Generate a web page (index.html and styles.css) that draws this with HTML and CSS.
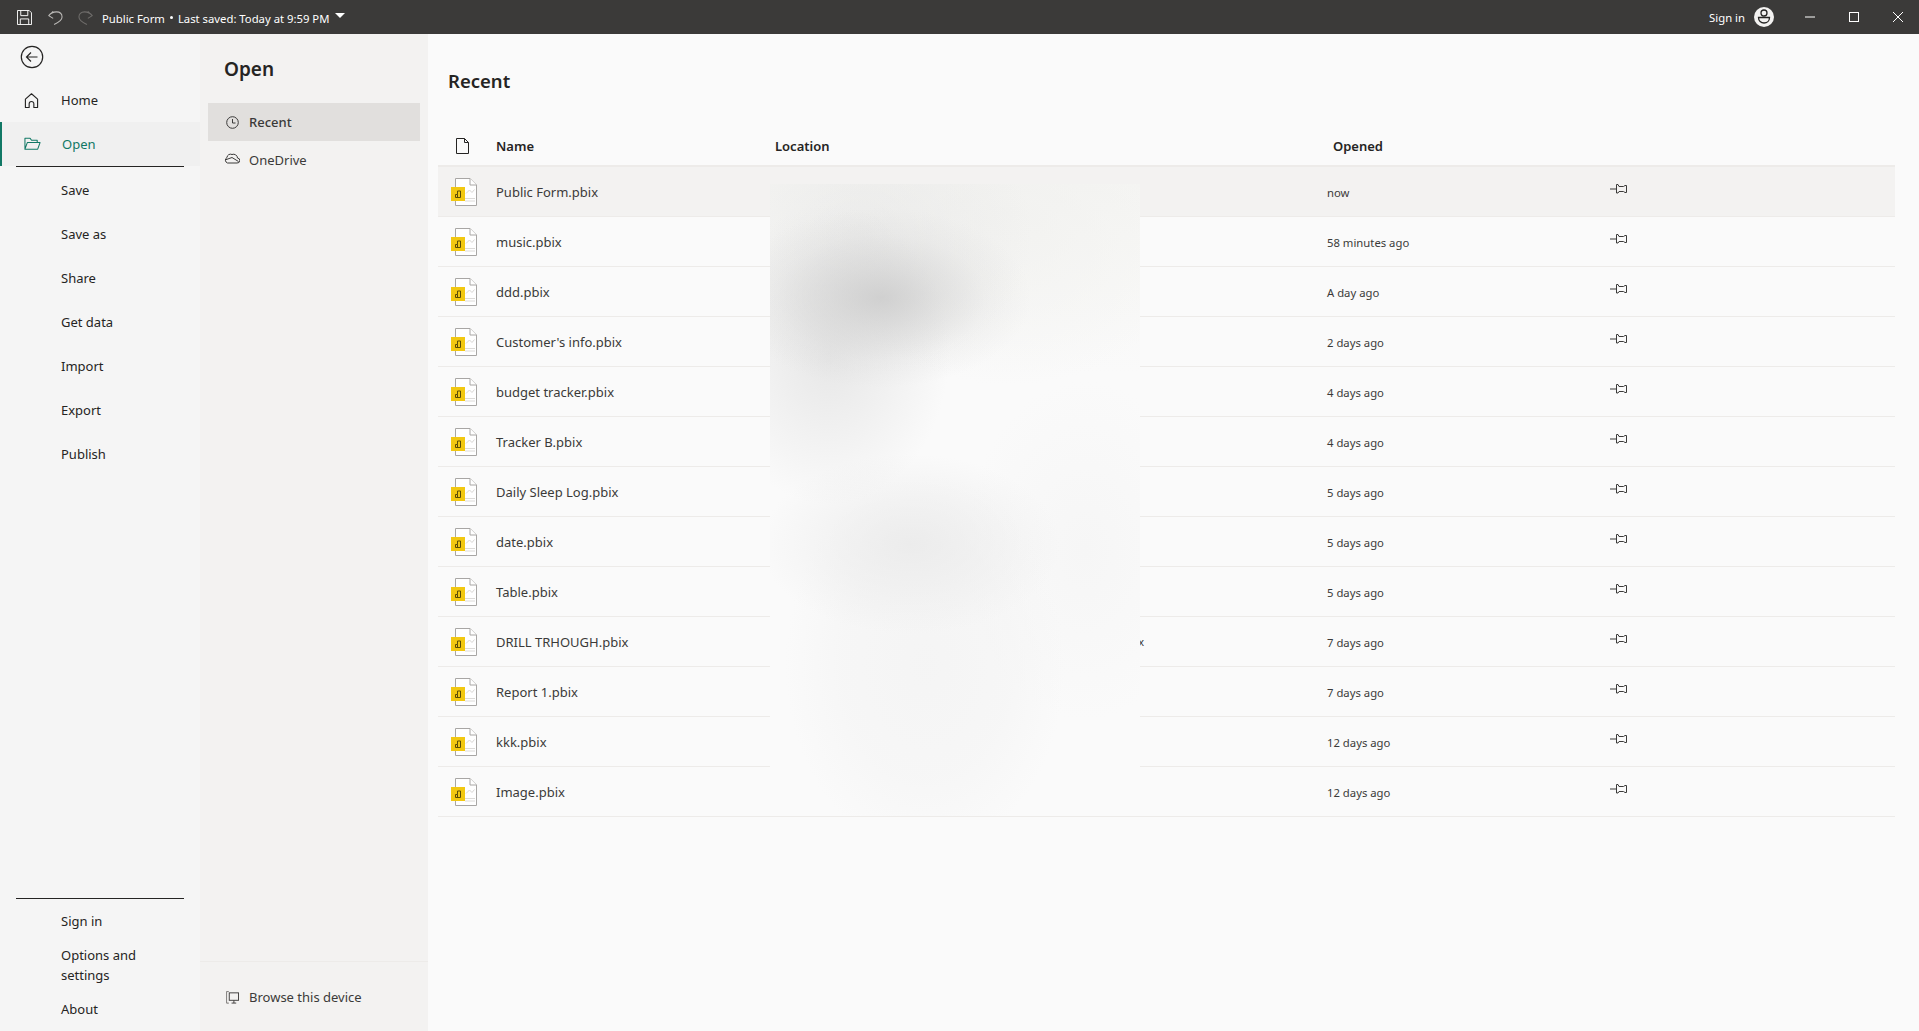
FILE: index.html
```html
<!DOCTYPE html>
<html lang="en">
<head>
<meta charset="utf-8">
<title>Public Form</title>
<link rel="stylesheet" href="styles.css">
</head>
<body>
<svg class="defs" width="0" height="0" aria-hidden="true">
  <symbol id="pbix" viewBox="0 0 26 28">
    <path d="M4.500 .5H19L25.500 7V27.500H4.500Z" fill="#fff" stroke="#a8a6a4"/>
    <path d="M19 .5V7H25.500" fill="#fff" stroke="#a8a6a4"/>
    <path d="M15 15.500l3.500-3.500 2.500 2.500 2.500-3" fill="none" stroke="#d8d6d4"/>
    <path d="M14 20.500H24M14 23H24" stroke="#dcdad8"/>
    <rect x="0" y="9" width="14" height="14" fill="#f2c811"/>
    <path d="M4.500 19.500V16.500H6.500V13H9.500V19.500ZM6.500 19.500V16.500" fill="none" stroke="#5c4d06"/>
  </symbol>
  <symbol id="pin" viewBox="0 0 17 11">
    <path d="M0 6H6.500M6.500 1.500V10H8L9 8.500H13.500L15 9.500H16.500V2.500H15L13.500 3.500H9L8 1.500Z" fill="none" stroke="#3b3a39"/>
  </symbol>
</svg>

<header class="titlebar">
  <svg class="ti save" viewBox="0 0 16 16"><path d="M.5.5H13L15.500 3V15.500H.5ZM4 .5V6H11.500V.5M3.500 15.500V9.500H12.500V15.500" fill="none" stroke="#fff"/></svg>
  <svg class="ti undo" viewBox="0 0 16 16"><path d="M5.500 1.500L.8 6 5.500 9M.8 6C3 3 6 2 9 2 13 2 15 4.500 15 7.500 15 10 12 13 6.500 15.500" fill="none" stroke="#bdbbb9" stroke-width="1.100"/></svg>
  <svg class="ti redo" viewBox="0 0 16 16"><path d="M10.500 1.500L15.200 6 10.500 9M15.200 6C13 3 10 2 7 2 3 2 1 4.500 1 7.500 1 10 4 13 9.500 15.500" fill="none" stroke="#6f6d6b" stroke-width="1.100"/></svg>
  <span class="doc">Public Form</span>
  <span class="dot"></span>
  <span class="doc">Last saved: Today at 9:59 PM</span>
  <span class="caret"></span>
  <span class="grow"></span>
  <span class="signin">Sign in</span>
  <svg class="avatar" viewBox="0 0 20 20">
    <circle cx="10" cy="10" r="10" fill="#f3f2f1"/>
    <circle cx="10" cy="6" r="3" fill="none" stroke="#252423" stroke-width="1.300"/>
    <path d="M4.500 10.500H15.500C15.500 14 13 16 10 16S4.500 14 4.500 10.500Z" fill="none" stroke="#252423" stroke-width="1.300"/>
  </svg>
  <svg class="win wmin" viewBox="0 0 10 10"><path d="M0 5H10" stroke="#fff"/></svg>
  <svg class="win wmax" viewBox="0 0 10 10"><rect x=".5" y=".5" width="9" height="9" fill="none" stroke="#fff"/></svg>
  <svg class="win wclose" viewBox="0 0 10 10"><path d="M0 0L10 10M10 0L0 10" stroke="#fff"/></svg>
</header>

<div class="app">
  <nav class="nav">
    <svg class="back" viewBox="0 0 24 24"><circle cx="12" cy="12" r="10.700" fill="none" stroke="#252423" stroke-width="1.200"/><path d="M17.500 12H7M11 7.500L6.500 12 11 16.500" fill="none" stroke="#252423" stroke-width="1.200"/></svg>
    <a class="nav-item home">
      <svg class="nav-ic" viewBox="0 0 16 16"><path d="M1.500 15.500V6.500L8 .8l6.500 5.700v9H10.500V11.500a2.500 2.500 0 0 0-5 0v4Z" fill="none" stroke="#252423" stroke-width="1.200" stroke-linejoin="round"/></svg>
      Home
    </a>
    <a class="nav-item open">
      <svg class="nav-ic wide" viewBox="0 0 18 14"><path d="M1 12.500V1H6.500L8 3H14V5M1 12.500 3.500 5.500H17L14.500 12.500Z" fill="none" stroke="#117865" stroke-width="1.100" stroke-linejoin="round"/></svg>
      Open
    </a>
    <div class="rule"></div>
    <a class="nav-item plain first">Save</a>
    <a class="nav-item plain">Save as</a>
    <a class="nav-item plain">Share</a>
    <a class="nav-item plain">Get data</a>
    <a class="nav-item plain">Import</a>
    <a class="nav-item plain">Export</a>
    <a class="nav-item plain">Publish</a>
    <span class="grow"></span>
    <div class="rule"></div>
    <a class="nav-item plain">Sign in</a>
    <a class="nav-item plain multi">Options and settings</a>
    <a class="nav-item plain">About</a>
  </nav>

  <aside class="side">
    <h2 class="side-title">Open</h2>
    <a class="side-item active">
      <svg class="side-ic" viewBox="0 0 13 13"><circle cx="6.500" cy="6.500" r="5.800" fill="none" stroke="#3b3a39"/><path d="M6.500 3V7H9.500" fill="none" stroke="#3b3a39"/></svg>
      Recent
    </a>
    <a class="side-item">
      <svg class="side-ic cloud" viewBox="0 0 16 12"><path d="M3.500 11H13a2.500 2.500 0 0 0 .5-5A4 4 0 0 0 8 2.500 3.500 3.500 0 0 0 3 5.500 3 3 0 0 0 3.500 11ZM1 8L8 5.500 14.500 9.500" fill="none" stroke="#3b3a39"/></svg>
      OneDrive
    </a>
    <span class="grow"></span>
    <div class="side-foot">
      <a class="side-item foot">
        <svg class="side-ic" viewBox="0 0 14 14"><path d="M3 .5H1.500a1 1 0 0 0-1 1V12a1 1 0 0 0 1 1H3" fill="none" stroke="#8a8886" stroke-width="1.300"/><rect x="3.500" y="2" width="10" height="8" fill="none" stroke="#3b3a39"/><path d="M8.500 10V13M6 13H11" stroke="#3b3a39"/></svg>
        Browse this device
      </a>
    </div>
  </aside>

  <main class="main">
    <h1 class="main-title">Recent</h1>
    <div class="table">
      <div class="row head">
        <span class="c-ic"><svg class="head-doc" viewBox="0 0 13 16"><path d="M.5.500H8.500L12.500 4.500V15.500H.5ZM8.500.5V4.500H12.500" fill="none" stroke="#252423"/></svg></span>
        <span class="c-name">Name</span>
        <span class="c-loc">Location</span>
        <span class="c-time head-time">Opened</span>
      </div>
      <div class="row hot"><span class="c-ic"><svg class="file"><use href="#pbix"/></svg></span><span class="c-name">Public Form.pbix</span><span class="c-loc"></span><span class="c-time">now</span><svg class="pin"><use href="#pin"/></svg></div>
      <div class="row"><span class="c-ic"><svg class="file"><use href="#pbix"/></svg></span><span class="c-name">music.pbix</span><span class="c-loc"></span><span class="c-time">58 minutes ago</span><svg class="pin"><use href="#pin"/></svg></div>
      <div class="row"><span class="c-ic"><svg class="file"><use href="#pbix"/></svg></span><span class="c-name">ddd.pbix</span><span class="c-loc"></span><span class="c-time">A day ago</span><svg class="pin"><use href="#pin"/></svg></div>
      <div class="row"><span class="c-ic"><svg class="file"><use href="#pbix"/></svg></span><span class="c-name">Customer's info.pbix</span><span class="c-loc"></span><span class="c-time">2 days ago</span><svg class="pin"><use href="#pin"/></svg></div>
      <div class="row"><span class="c-ic"><svg class="file"><use href="#pbix"/></svg></span><span class="c-name">budget tracker.pbix</span><span class="c-loc"></span><span class="c-time">4 days ago</span><svg class="pin"><use href="#pin"/></svg></div>
      <div class="row"><span class="c-ic"><svg class="file"><use href="#pbix"/></svg></span><span class="c-name">Tracker B.pbix</span><span class="c-loc"></span><span class="c-time">4 days ago</span><svg class="pin"><use href="#pin"/></svg></div>
      <div class="row"><span class="c-ic"><svg class="file"><use href="#pbix"/></svg></span><span class="c-name">Daily Sleep Log.pbix</span><span class="c-loc"></span><span class="c-time">5 days ago</span><svg class="pin"><use href="#pin"/></svg></div>
      <div class="row"><span class="c-ic"><svg class="file"><use href="#pbix"/></svg></span><span class="c-name">date.pbix</span><span class="c-loc"></span><span class="c-time">5 days ago</span><svg class="pin"><use href="#pin"/></svg></div>
      <div class="row"><span class="c-ic"><svg class="file"><use href="#pbix"/></svg></span><span class="c-name">Table.pbix</span><span class="c-loc"></span><span class="c-time">5 days ago</span><svg class="pin"><use href="#pin"/></svg></div>
      <div class="row"><span class="c-ic"><svg class="file"><use href="#pbix"/></svg></span><span class="c-name">DRILL TRHOUGH.pbix</span><span class="c-loc"><span class="loc-tail">x</span></span><span class="c-time">7 days ago</span><svg class="pin"><use href="#pin"/></svg></div>
      <div class="row"><span class="c-ic"><svg class="file"><use href="#pbix"/></svg></span><span class="c-name">Report 1.pbix</span><span class="c-loc"></span><span class="c-time">7 days ago</span><svg class="pin"><use href="#pin"/></svg></div>
      <div class="row"><span class="c-ic"><svg class="file"><use href="#pbix"/></svg></span><span class="c-name">kkk.pbix</span><span class="c-loc"></span><span class="c-time">12 days ago</span><svg class="pin"><use href="#pin"/></svg></div>
      <div class="row"><span class="c-ic"><svg class="file"><use href="#pbix"/></svg></span><span class="c-name">Image.pbix</span><span class="c-loc"></span><span class="c-time">12 days ago</span><svg class="pin"><use href="#pin"/></svg></div>
      <div class="blur"></div>
    </div>
  </main>
</div>
</body>
</html>
```

FILE: styles.css
```css
* { box-sizing: border-box; }
html, body { margin: 0; height: 100%; overflow: hidden; }
body {
  display: flex;
  flex-direction: column;
  font-family: "Noto Sans", "Open Sans", sans-serif;
  color: #252423;
  background: #fafafa;
}
.defs { position: absolute; }
.grow { flex: 1; }

.titlebar {
  height: 34px;
  flex: none;
  display: flex;
  align-items: center;
  background: #3b3a39;
  color: #fff;
  font-size: 11.300px;
  padding-left: 17px;
}
.ti { width: 15px; height: 15px; flex: none; }
.undo { margin-left: 16px; }
.redo { margin-left: 15px; }
.doc { white-space: nowrap; margin-top: 3px; }
.redo + .doc { margin-left: 9px; }
.dot { width: 3px; height: 3px; border-radius: 50%; background: #fff; margin: 0 5px 0 5px; }
.caret {
  width: 0; height: 0;
  margin: 0 0 4px 6px;
  border-left: 5px solid transparent;
  border-right: 5px solid transparent;
  border-top: 5px solid #fff;
}
.signin { font-size: 11.300px; }
.avatar { width: 20px; height: 20px; margin-left: 9px; }
.win { width: 10px; height: 10px; flex: none; }
.wmin { margin-left: 31px; }
.wmax { margin-left: 34px; }
.wclose { margin-left: 34px; margin-right: 16px; }

.app { flex: 1; display: flex; min-height: 0; }

.nav {
  width: 200px;
  flex: none;
  display: flex;
  flex-direction: column;
  background: #f5f5f5;
  font-size: 13px;
}
.back { width: 24px; height: 24px; margin: 11px 0 0 20px; flex: none; }
.nav-item {
  display: flex;
  align-items: center;
  height: 44px;
  padding-left: 61px;
  flex: none;
}
.nav-item.home { margin-top: 9px; padding-left: 24px; }
.nav-item.open {
  padding-left: 24px;
  background: #f0f0f0;
  border-left: 2px solid #117865;
  color: #117865;
}
.nav-ic { width: 15px; height: 15px; margin-right: 22px; flex: none; }
.nav-ic.wide { width: 17px; height: 14px; margin-right: 21px; margin-left: -2px; }
.rule { height: 1px; background: #252423; margin: 0 16px; flex: none; }
.nav-item.first { margin-top: 1px; }
.nav-item.multi { line-height: 20px; padding-right: 40px; }

.side {
  width: 228px;
  flex: none;
  display: flex;
  flex-direction: column;
  background: #f3f2f1;
  padding: 0 8px;
  font-size: 13px;
}
.side-title {
  margin: 21px 0 19px 16px;
  font-size: 19px;
  line-height: 29px;
  font-weight: 600;
}
.side-item {
  display: flex;
  align-items: center;
  height: 38px;
  padding-left: 18px;
  color: #3b3a39;
}
.side-item.active { background: #e1dfdd; font-weight: 500; }
.side-ic { width: 13px; height: 13px; margin-right: 10px; flex: none; }
.side-ic.cloud { width: 16px; height: 12px; margin-left: -2px; margin-right: 9px; margin-top: -4px; }
.side-foot { border-top: 1px solid #edebe9; margin: 0 -8px; padding: 16px 8px 14px; height: 70px; flex: none; }

.main { flex: 1; min-width: 0; padding: 0 24px 0 10px; }
.main-title {
  margin: 31px 0 0 10px;
  font-size: 18.500px;
  line-height: 32px;
  font-weight: 600;
}
.table { position: relative; margin-top: 33px; }
.row {
  position: relative;
  display: flex;
  align-items: center;
  height: 50px;
  border-bottom: 1px solid #edebe9;
  font-size: 13px;
  color: #3b3a39;
}
.row.head { height: 37px; padding-bottom: 4px; font-weight: 600; color: #252423; border-bottom: 2px solid #edebe9; }
.row.hot { background: #f3f2f1; }
.c-ic { width: 58px; padding-left: 13px; flex: none; display: flex; }
.c-name { width: 279px; flex: none; white-space: nowrap; }
.c-loc { width: 552px; flex: none; font-size: 13px; }
.row:not(.head) .c-loc { display: flex; justify-content: flex-end; font-size: 11px; }
.loc-tail { margin-right: 183px; }
.c-time { font-size: 11.300px; margin-top: 2px; white-space: nowrap; }
.c-time.head-time { font-size: 13px; margin: 0 0 0 6px; }
.head-doc { width: 13px; height: 16px; margin-left: 5px; }
.file { width: 26px; height: 28px; }
.pin { position: absolute; left: 1172px; top: 16px; width: 17px; height: 11px; }
.blur {
  position: absolute;
  left: 332px;
  top: 54px;
  width: 370px;
  height: 632px;
  background:
    radial-gradient(ellipse 150px 90px at 30% 18%, rgba(205,205,205,.9), rgba(205,205,205,.5) 35%, rgba(205,205,205,.15) 70%, rgba(205,205,205,0) 100%),
    radial-gradient(ellipse 120px 150px at 16% 27%, rgba(215,215,215,.55), rgba(215,215,215,.3) 45%, rgba(215,215,215,0) 100%),
    radial-gradient(ellipse 170px 140px at 25% 8%, rgba(225,225,225,.5), rgba(225,225,225,0) 100%),
    radial-gradient(ellipse 150px 90px at 38% 57%, rgba(234,234,234,.85), rgba(234,234,234,.45) 50%, rgba(234,234,234,0) 100%),
    radial-gradient(ellipse 140px 190px at 42% 76%, rgba(244,244,244,.9), rgba(244,244,244,.6) 60%, rgba(244,244,244,0) 100%),
    radial-gradient(ellipse 120px 170px at 85% 58%, rgba(245,245,245,.8), rgba(245,245,245,0) 100%),
    radial-gradient(ellipse 200px 170px at 65% 5%, rgba(241,241,239,.8), rgba(241,241,239,0) 100%),
    linear-gradient(#f5f5f3 0, #f7f7f5 8%, #fafafa 30%);
}
```
